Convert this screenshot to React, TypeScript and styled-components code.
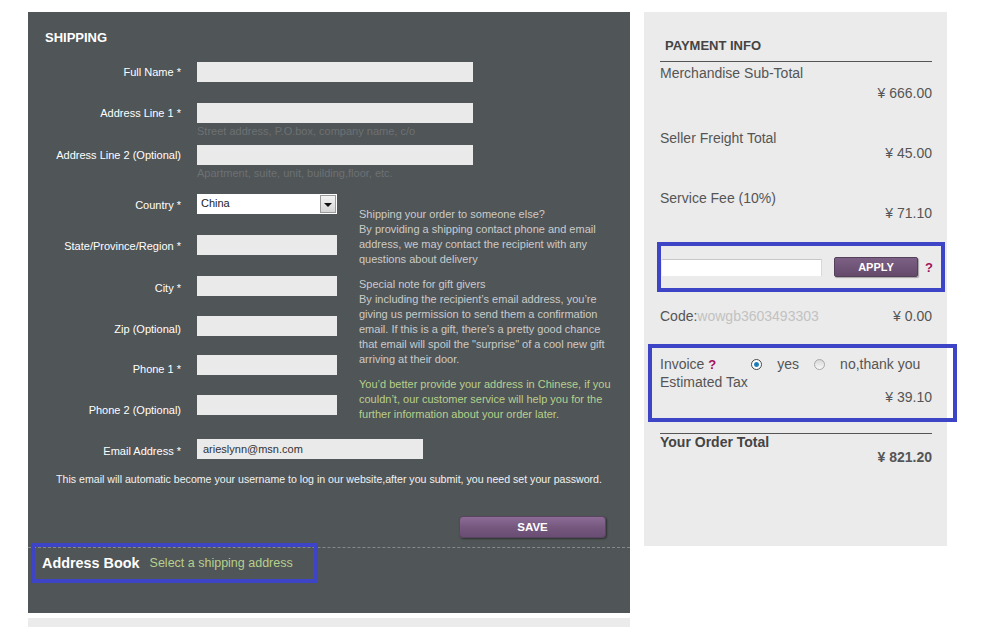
import React from 'react'
import styled, { createGlobalStyle } from 'styled-components'

const GlobalStyle = createGlobalStyle`
  html, body {
    margin: 0;
    padding: 0;
    background: #ffffff;
    font-family: 'Liberation Sans', Arial, sans-serif;
  }
`

const Page = styled.div`
  display: flex;
  align-items: flex-start;
  gap: 14px;
  padding: 12px 0 0 28px;
  width: 991px;
  height: 627px;
  box-sizing: border-box;
  overflow: hidden;
`

const LeftCol = styled.div`
  width: 602px;
  display: flex;
  flex-direction: column;
  gap: 5px;
`

const ShipPanel = styled.div`
  background: #505557;
  height: 601px;
  padding-top: 18px;
  box-sizing: border-box;
  display: flex;
  flex-direction: column;
`

const Strip = styled.div`
  height: 20px;
  background: #ebebeb;
`

const Title = styled.div`
  color: #ffffff;
  font-size: 13px;
  font-weight: bold;
  line-height: 16px;
  padding-left: 17px;
  margin-bottom: 16px;
`

const FieldRow = styled.div<{ $h: number }>`
  display: flex;
  align-items: flex-start;
  height: ${p => p.$h}px;
`

const Label = styled.label<{ $dy?: number }>`
  width: 153px;
  margin-right: 16px;
  padding-top: ${p => p.$dy ?? 0}px;
  text-align: right;
  color: #ffffff;
  font-size: 11px;
  line-height: 20px;
  white-space: nowrap;
`

const Field = styled.div`
  display: flex;
  flex-direction: column;
`

const TextInput = styled.div<{ $w: number }>`
  width: ${p => p.$w}px;
  height: 20px;
  background: #eaeaea;
  color: #333;
  font-size: 11px;
  line-height: 20px;
  padding-left: 6px;
  box-sizing: border-box;
`

const Hint = styled.div`
  color: #6d7174;
  font-size: 11px;
  line-height: 14px;
  margin-top: 1px;
`

const Select = styled.div`
  width: 140px;
  height: 20px;
  background: #ffffff;
  display: flex;
  align-items: stretch;
  justify-content: space-between;
  font-size: 11px;
  color: #222;
  padding-left: 4px;
  box-sizing: border-box;
  line-height: 18px;
`

const SelectArrow = styled.div`
  width: 16px;
  margin: 1px 1px 1px 0;
  background: linear-gradient(#f4f4f4, #d6d6d6);
  border: 1px solid #9a9a9a;
  box-sizing: border-box;
  display: flex;
  align-items: center;
  justify-content: center;
  &::after {
    content: '';
    border-left: 4px solid transparent;
    border-right: 4px solid transparent;
    border-top: 4px solid #111;
    margin-top: 2px;
  }
`

const Split = styled.div`
  display: flex;
  align-items: flex-start;
`

const Notes = styled.div`
  width: 258px;
  margin-left: 22px;
  margin-top: 13px;
  font-size: 11px;
  line-height: 15px;
`

const NotePara = styled.p<{ $green?: boolean }>`
  margin: 0 0 10px;
  color: ${p => (p.$green ? '#b7d08c' : '#cbcbcb')};
`

const EmailNote = styled.div`
  text-align: center;
  color: #f2f2f2;
  font-size: 10.6px;
  line-height: 14px;
  margin-top: 13px;
`

const SaveBar = styled.div`
  display: flex;
  justify-content: flex-end;
  padding-right: 24px;
  margin-top: 30px;
`

const SaveButton = styled.button`
  width: 147px;
  height: 22px;
  border: 1px solid #5a4560;
  border-radius: 4px;
  background: linear-gradient(#8c6c96, #76587f 50%, #6a4d72);
  box-shadow: 1px 1px 2px rgba(0, 0, 0, 0.45);
  color: #ffffff;
  font-family: 'Liberation Sans', Arial, sans-serif;
  font-weight: bold;
  font-size: 11.5px;
  padding: 0;
`

const Footer = styled.div`
  margin-top: 9px;
  border-top: 1px dashed #85898b;
  padding-left: 3px;
`

const AddressBook = styled.div`
  display: inline-flex;
  align-items: center;
  gap: 10px;
  width: 287px;
  height: 40px;
  box-sizing: border-box;
  margin-top: -5px;
  border: 4px solid #3d45c6;
  padding-left: 7px;
`

const BookTitle = styled.span`
  color: #ffffff;
  font-weight: bold;
  font-size: 14.4px;
`

const BookLink = styled.span`
  color: #b7d08c;
  font-size: 12.5px;
`

const PayPanel = styled.div`
  width: 303px;
  height: 534px;
  background: #ebebeb;
  padding: 26px 15px 0 16px;
  box-sizing: border-box;
  color: #555;
  font-size: 14px;
  line-height: 15px;
`

const PayTitle = styled.div`
  font-size: 13px;
  font-weight: bold;
  color: #444;
  line-height: 16px;
  padding: 0 0 7px 5px;
  border-bottom: 1px solid #555;
  margin-bottom: 4px;
`

const Item = styled.div<{ $mb: number }>`
  margin-bottom: ${p => p.$mb}px;
`

const Amount = styled.div<{ $gap: number; $bold?: boolean }>`
  text-align: right;
  margin-top: ${p => p.$gap}px;
  font-weight: ${p => (p.$bold ? 'bold' : 'normal')};
`

const CouponBox = styled.div`
  margin: 0 -13px 0 -3px;
  height: 50px;
  border: 4px solid #3d45c6;
  box-sizing: border-box;
  display: flex;
  align-items: center;
  padding-left: 1px;
`

const CouponInput = styled.div`
  width: 160px;
  height: 17px;
  background: #ffffff;
  border-top: 1px solid #c8c8c8;
  border-right: 1px solid #d8d8d8;
  box-sizing: border-box;
`

const ApplyButton = styled.button`
  margin-left: 12px;
  width: 84px;
  height: 20px;
  border: 1px solid #55405a;
  border-radius: 2px;
  background: linear-gradient(#7d6085, #644a6b);
  box-shadow: 1px 1px 1px rgba(0, 0, 0, 0.3);
  color: #ffffff;
  font-family: 'Liberation Sans', Arial, sans-serif;
  font-weight: bold;
  font-size: 11px;
  padding: 0;
`

const Help = styled.span<{ $ml?: number }>`
  color: #a3125c;
  font-weight: bold;
  font-size: 13px;
  margin-left: ${p => p.$ml ?? 0}px;
`

const CodeRow = styled.div`
  display: flex;
  justify-content: space-between;
  margin-top: 17px;
`

const CodeValue = styled.span`
  color: #c2c2c2;
`

const InvoiceBox = styled.div`
  margin: 20px -25px 0 -12px;
  height: 78px;
  border: 4px solid #3d45c6;
  box-sizing: border-box;
  padding: 9px 21px 0 8px;
`

const InvoiceRow = styled.div`
  display: flex;
  align-items: center;
`

const Radio = styled.span<{ $on?: boolean }>`
  width: 11px;
  height: 11px;
  border-radius: 50%;
  box-sizing: border-box;
  border: 1px solid ${p => (p.$on ? '#4a4a4a' : '#a8a8a8')};
  background: ${p =>
    p.$on
      ? 'radial-gradient(circle, #1b6fa8 0, #2a86c0 2px, #ffffff 3px)'
      : 'linear-gradient(#d8d8d8, #f8f8f8)'};
  margin: 0 15px 0 ${p => (p.$on ? 35 : 15)}px;
`

const TotalLine = styled.div`
  margin-top: 11px;
  border-top: 1px solid #555;
`

const TotalTitle = styled.div`
  font-weight: bold;
  color: #444;
  margin-top: 1px;
`

const fields = [
  { label: 'State/Province/Region *', h: 41, dy: 1 },
  { label: 'City *', h: 40, dy: 2 },
  { label: 'Zip (Optional)', h: 39, dy: 3 },
  { label: 'Phone 1 *', h: 40, dy: 4 },
  { label: 'Phone 2 (Optional)', h: 44, dy: 5 },
]

export default function App() {
  return (
    <>
      <GlobalStyle />
      <Page>
        <LeftCol>
          <ShipPanel>
            <Title>SHIPPING</Title>
            <FieldRow $h={41}>
              <Label>Full Name *</Label>
              <TextInput $w={276} />
            </FieldRow>
            <FieldRow $h={42}>
              <Label>Address Line 1 *</Label>
              <Field>
                <TextInput $w={276} />
                <Hint>Street address, P.O.box, company name, c/o</Hint>
              </Field>
            </FieldRow>
            <FieldRow $h={49}>
              <Label>Address Line 2 (Optional)</Label>
              <Field>
                <TextInput $w={276} />
                <Hint>Apartment, suite, unit, building,floor, etc.</Hint>
              </Field>
            </FieldRow>
            <Split>
              <div>
                <FieldRow $h={41}>
                  <Label $dy={1}>Country *</Label>
                  <Select>
                    China
                    <SelectArrow />
                  </Select>
                </FieldRow>
                {fields.map(f => (
                  <FieldRow key={f.label} $h={f.h}>
                    <Label $dy={f.dy}>{f.label}</Label>
                    <TextInput $w={140} />
                  </FieldRow>
                ))}
              </div>
              <Notes>
                <NotePara>
                  Shipping your order to someone else?
                  <br />
                  By providing a shipping contact phone and email address, we
                  may contact the recipient with any questions about delivery
                </NotePara>
                <NotePara>
                  Special note for gift givers
                  <br />
                  By including the recipient’s email address, you’re giving us
                  permission to send them a confirmation email. If this is a
                  gift, there’s a pretty good chance that email will spoil the
                  "surprise" of a cool new gift arriving at their door.
                </NotePara>
                <NotePara $green>
                  You’d better provide your address in Chinese, if you
                  couldn’t, our customer service will help you for the further
                  information about your order later.
                </NotePara>
              </Notes>
            </Split>
            <FieldRow $h={20}>
              <Label $dy={2}>Email Address *</Label>
              <TextInput $w={226}>arieslynn@msn.com</TextInput>
            </FieldRow>
            <EmailNote>
              This email will automatic become your username to log in our
              website,after you submit, you need set your password.
            </EmailNote>
            <SaveBar>
              <SaveButton>SAVE</SaveButton>
            </SaveBar>
            <Footer>
              <AddressBook>
                <BookTitle>Address Book</BookTitle>
                <BookLink>Select a shipping address</BookLink>
              </AddressBook>
            </Footer>
          </ShipPanel>
          <Strip />
        </LeftCol>

        <PayPanel>
          <PayTitle>PAYMENT INFO</PayTitle>
          <Item $mb={30}>
            <div>Merchandise Sub-Total</div>
            <Amount $gap={5}>¥ 666.00</Amount>
          </Item>
          <Item $mb={30}>
            <div>Seller Freight Total</div>
            <Amount $gap={0}>¥ 45.00</Amount>
          </Item>
          <Item $mb={21}>
            <div>Service Fee (10%)</div>
            <Amount $gap={0}>¥ 71.10</Amount>
          </Item>
          <CouponBox>
            <CouponInput />
            <ApplyButton>APPLY</ApplyButton>
            <Help $ml={7}>?</Help>
          </CouponBox>
          <CodeRow>
            <span>
              Code:<CodeValue>wowgb3603493303</CodeValue>
            </span>
            <span>¥ 0.00</span>
          </CodeRow>
          <InvoiceBox>
            <InvoiceRow>
              Invoice <Help $ml={4}>?</Help>
              <Radio $on />
              yes
              <Radio />
              no,thank you
            </InvoiceRow>
            <div style={{ marginTop: 3 }}>Estimated Tax</div>
            <Amount $gap={0}>¥ 39.10</Amount>
          </InvoiceBox>
          <TotalLine />
          <TotalTitle>Your Order Total</TotalTitle>
          <Amount $gap={0} $bold>
            ¥ 821.20
          </Amount>
        </PayPanel>
      </Page>
    </>
  )
}
